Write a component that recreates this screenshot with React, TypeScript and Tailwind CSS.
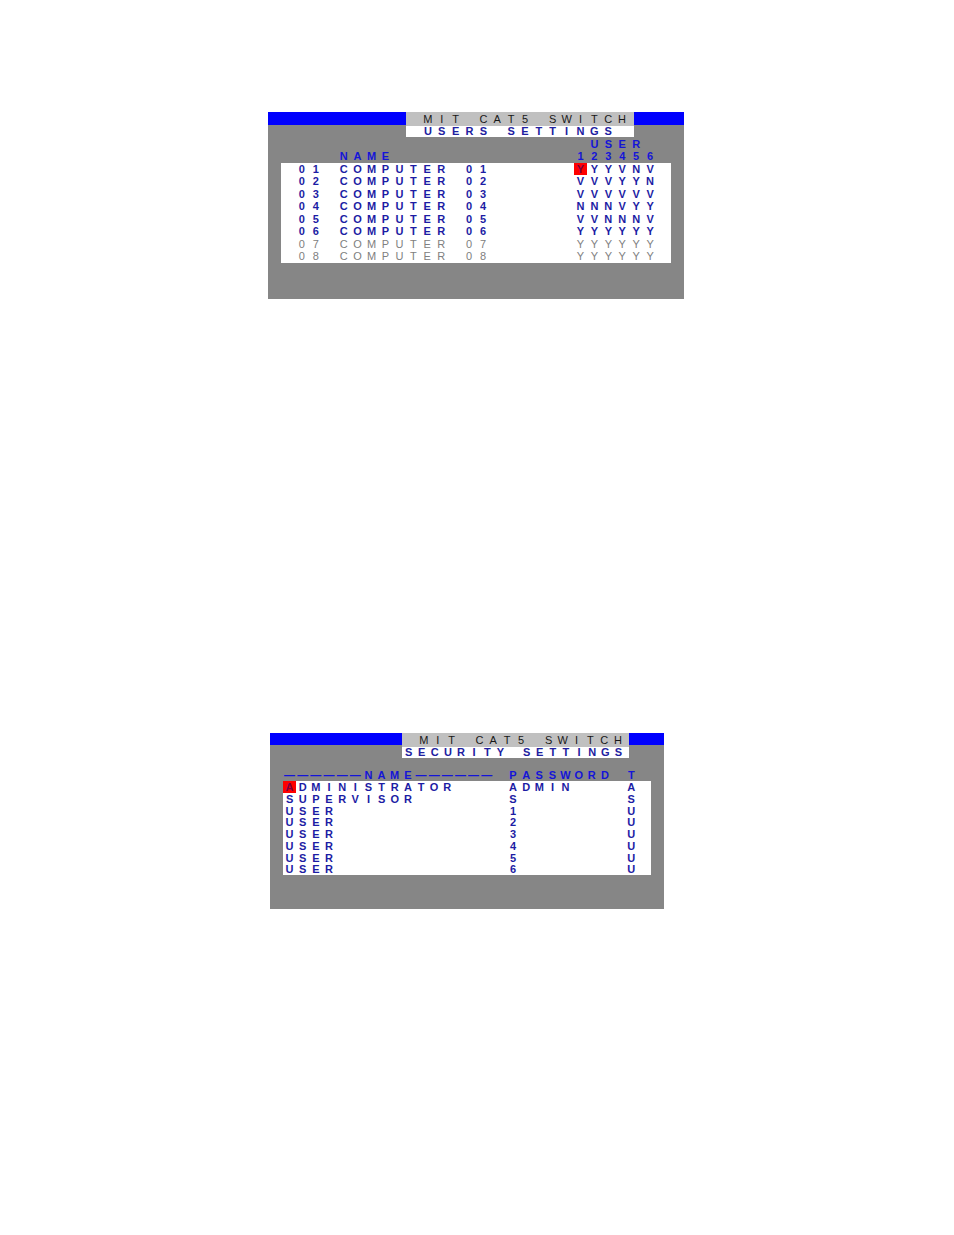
import clsx from "clsx";

const COMPUTERS = [
  { no: "01", name: "COMPUTER 01", access: "YYYVNV" },
  { no: "02", name: "COMPUTER 02", access: "VVVYYN" },
  { no: "03", name: "COMPUTER 03", access: "VVVVVV" },
  { no: "04", name: "COMPUTER 04", access: "NNNVYY" },
  { no: "05", name: "COMPUTER 05", access: "VVNNNV" },
  { no: "06", name: "COMPUTER 06", access: "YYYYYY" },
  { no: "07", name: "COMPUTER 07", access: "YYYYYY", disabled: true },
  { no: "08", name: "COMPUTER 08", access: "YYYYYY", disabled: true },
];

const ACCOUNTS = [
  { name: "ADMINISTRATOR", password: "ADMIN", type: "A" },
  { name: "SUPERVISOR", password: "S", type: "S" },
  { name: "USER", password: "1", type: "U" },
  { name: "USER", password: "2", type: "U" },
  { name: "USER", password: "3", type: "U" },
  { name: "USER", password: "4", type: "U" },
  { name: "USER", password: "5", type: "U" },
  { name: "USER", password: "6", type: "U" },
];

interface CharsProps {
  text: string;
  cols: number;
  cursor?: boolean;
}

// The OSD is a character display: every glyph sits in its own column.
function Chars({ text, cols, cursor }: CharsProps) {
  return (
    <span className="grid" style={{ gridTemplateColumns: `repeat(${cols}, minmax(0, 1fr))` }}>
      {text.split("").map((ch, i) => (
        <span
          key={i}
          className={clsx("text-center whitespace-pre", cursor && i === 0 && "bg-[#fe0000] text-[#7c0040]")}
        >
          {ch}
        </span>
      ))}
    </span>
  );
}

function Columns({ widths }: { widths: number[] }) {
  const total = widths.reduce((a, b) => a + b, 0);
  return (
    <colgroup>
      {widths.map((w, i) => (
        <col key={i} style={{ width: `${(w / total) * 100}%` }} />
      ))}
    </colgroup>
  );
}

function Title() {
  return (
    <h1 className="bg-[#c0c0c0] pl-[15px] font-normal text-[#181818]">
      <span className="block w-[208px] leading-[14px]">
        <Chars text="MIT CAT5 SWITCH" cols={15} />
      </span>
    </h1>
  );
}

function UsersPanel() {
  return (
    <section className="w-full max-w-[416px] bg-[#868686] pb-9">
      <header className="flex">
        <div className="h-[13px] flex-1 bg-[#0000fe]" />
        <div className="w-[228px]">
          <Title />
          <h2 className="bg-white pl-[15px] text-[#2020a0]">
            <span className="block w-[194px]">
              <Chars text="USERS SETTINGS" cols={14} />
            </span>
          </h2>
        </div>
        <div className="h-[13px] w-[50px] bg-[#0000fe]" />
      </header>
      <div className="mt-px px-[13px]">
        <table className="w-full table-fixed border-collapse">
          <Columns widths={[1, 3, 17, 1, 1, 1, 1, 1, 1, 1]} />
          <thead className="text-[#1414d8]">
            <tr className="h-3">
              <td colSpan={3} />
              <th colSpan={6} className="p-0">
                <Chars text=" USER " cols={6} />
              </th>
              <td />
            </tr>
            <tr className="h-[13px]">
              <td colSpan={2} />
              <th className="p-0">
                <Chars text="NAME" cols={17} />
              </th>
              {["1", "2", "3", "4", "5", "6"].map((n) => (
                <th key={n} className="p-0 text-center">{n}</th>
              ))}
              <td />
            </tr>
          </thead>
          <tbody className="bg-white">
            {COMPUTERS.map((c, row) => (
              <tr
                key={c.no}
                className={clsx(
                  "h-3 even:h-[13px]",
                  c.disabled ? "font-normal text-[#808080]" : "font-bold text-[#1c1ca4]"
                )}
              >
                <td />
                <td className="p-0">
                  <Chars text={c.no} cols={3} />
                </td>
                <td className="p-0">
                  <Chars text={c.name} cols={17} />
                </td>
                {c.access.split("").map((a, col) => (
                  <td
                    key={col}
                    className={clsx("p-0 text-center", row === 0 && col === 0 && "bg-[#fe0000] text-[#7c0040]")}
                  >
                    {a}
                  </td>
                ))}
                <td />
              </tr>
            ))}
          </tbody>
        </table>
      </div>
    </section>
  );
}

function SecurityPanel() {
  return (
    <section className="ml-0.5 w-full max-w-[394px] bg-[#868686] pb-[34px]">
      <header className="flex">
        <div className="h-3 flex-1 bg-[#0000fe]" />
        <div className="w-[227px]">
          <Title />
          <h2 className="bg-white text-[#2020a0]">
            <span className="block w-[223px]">
              <Chars text="SECURITY SETTINGS" cols={17} />
            </span>
          </h2>
        </div>
        <div className="h-3 w-[35px] bg-[#0000fe]" />
      </header>
      <div className="mt-3 px-[13px]">
        <table className="w-full table-fixed border-collapse">
          <Columns widths={[17, 9, 2]} />
          <thead className="text-[#1414d8]">
            <tr className="h-[11px]">
              <th className="p-0">
                <Chars text="——————NAME——————" cols={17} />
              </th>
              <th className="p-0">
                <Chars text="PASSWORD" cols={9} />
              </th>
              <th className="p-0">
                <Chars text="T" cols={2} />
              </th>
            </tr>
          </thead>
          <tbody className="bg-white font-bold text-[#1c1ca4]">
            {ACCOUNTS.map((a, row) => (
              <tr key={row} className={clsx("h-3 nth-[4n]:h-[11px]", row === 0 && "leading-3")}>
                <td className="p-0">
                  <Chars text={a.name} cols={17} cursor={row === 0} />
                </td>
                <td className="p-0">
                  <Chars text={a.password} cols={9} />
                </td>
                <td className="p-0">
                  <Chars text={a.type} cols={2} />
                </td>
              </tr>
            ))}
          </tbody>
        </table>
      </div>
    </section>
  );
}

export default function App() {
  return (
    <main className="flex min-h-screen flex-col gap-[434px] bg-white pt-28 pl-[268px] font-['Liberation_Sans',Arial,sans-serif] text-[11px] leading-[11px] font-bold">
      <UsersPanel />
      <SecurityPanel />
    </main>
  );
}
